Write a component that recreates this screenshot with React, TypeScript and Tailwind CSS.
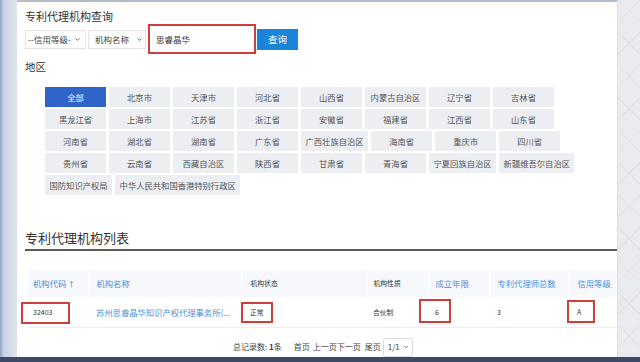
import { ChevronDown } from "lucide-react";

const regions = [
  "全部", "北京市", "天津市", "河北省", "山西省", "内蒙古自治区", "辽宁省", "吉林省",
  "黑龙江省", "上海市", "江苏省", "浙江省", "安徽省", "福建省", "江西省", "山东省",
  "河南省", "湖北省", "湖南省", "广东省", "广西壮族自治区", "海南省", "重庆市", "四川省",
  "贵州省", "云南省", "西藏自治区", "陕西省", "甘肃省", "青海省", "宁夏回族自治区", "新疆维吾尔自治区",
  "国防知识产权局", "中华人民共和国香港特别行政区",
];

const RedBox = ({ className }: { className: string }) => (
  <span className={`absolute border-2 border-[#cf3d3d] ${className}`} />
);

const App = () => {
  return (
    <div className="w-[640px] h-[362px] flex flex-col overflow-hidden font-['Noto_Sans_CJK_SC',sans-serif] bg-white">
      <div className="flex h-[357px]">
        {/* left strip */}
        <div className="w-[17px] bg-[linear-gradient(90deg,#8fa3c4_0px,#c9d4e3_4px,#dde4ee_17px)]" />

        {/* main panel */}
        <div className="w-[600px] flex flex-col overflow-hidden">
          <div className="h-[2px] bg-[#b3bdca]" />
          <div className="flex-1 pl-[8px] pt-[6px] bg-[linear-gradient(180deg,#fffdf4_0px,#ffffff_8px)]">
            <div className="h-[16px] leading-[16px] text-[11px] text-[#333]">专利代理机构查询</div>

            {/* search row */}
            <div className="h-[30px] flex items-center">
              <div className="w-[61px] h-[19px] border border-[#e3e3e3] flex items-center justify-between pl-[2px] pr-[4px] text-[8.5px] text-[#444]">
                <span>--信用等级-</span>
                <ChevronDown size={7} strokeWidth={3} className="text-[#555]" />
              </div>
              <div className="ml-[2px] w-[58px] h-[19px] border border-[#e3e3e3] flex items-center justify-between pl-[6px] pr-[2px] text-[8.5px] text-[#444]">
                <span>机构名称</span>
                <ChevronDown size={7} strokeWidth={3} className="text-[#555]" />
              </div>
              <div className="ml-[2px] w-[108px] h-[30px] border-2 border-[#cf3d3d] flex items-center pl-[6px] text-[8.5px] text-[#333]">
                思睿晶华
              </div>
              <button className="ml-[1px] w-[41px] h-[21px] bg-[#1a84d8] text-white text-[9.5px] flex items-center justify-center">
                查询
              </button>
            </div>

            <div className="mt-[6px] h-[14px] leading-[14px] text-[10.5px] text-[#333]">地区</div>

            {/* regions */}
            <div className="mt-[13px] ml-[20px] w-[540px] flex flex-wrap gap-x-[3px] gap-y-[2px]">
              {regions.map((r, i) => (
                <span
                  key={r}
                  className={`min-w-[61px] h-[20px] px-[4.5px] flex items-center justify-center text-[8.3px] whitespace-nowrap ${
                    i === 0 ? "bg-[#2f64c9] text-white" : "bg-[#eceef1] text-[#555]"
                  }`}
                >
                  {r}
                </span>
              ))}
            </div>

            <div className="mt-[34px] h-[18px] leading-[18px] text-[13px] text-[#333]">专利代理机构列表</div>
            <div className="mt-[2px] h-[2px] bg-[#5a5a5a]" />

            {/* table */}
            <table className="mt-[19px] ml-[3px] w-[589px] table-fixed border-collapse text-left">
              <colgroup>
                <col className="w-[60px]" />
                <col className="w-[154px]" />
                <col className="w-[125px]" />
                <col className="w-[61px]" />
                <col className="w-[62px]" />
                <col className="w-[78px]" />
                <col className="w-[49px]" />
              </colgroup>
              <thead>
                <tr className="h-[27px] bg-[#f6f8fb] text-[8.3px] text-[#4a8fd8] font-normal">
                  <th className="pl-[5px] font-normal border-r border-white">机构代码 <span className="text-[7px] text-[#666]">↑</span></th>
                  <th className="pl-[8px] font-normal border-r border-white">机构名称</th>
                  <th className="pl-[8px] font-normal border-r border-white text-[6.8px] text-[#333]">机构状态</th>
                  <th className="pl-[6px] font-normal border-r border-white text-[6.8px] text-[#333]">机构性质</th>
                  <th className="pl-[7px] font-normal border-r border-white">成立年限</th>
                  <th className="pl-[7px] font-normal border-r border-white">专利代理师总数</th>
                  <th className="pl-[9px] font-normal">信用等级</th>
                </tr>
              </thead>
              <tbody>
                <tr className="h-[30px] border-b border-[#eceef1] text-[7px] text-[#333]">
                  <td className="relative pl-[5px]">
                    32403
                    <RedBox className="left-[-7px] top-[5px] w-[49px] h-[22px]" />
                  </td>
                  <td className="pl-[8px] text-[8.3px] text-[#4a8fd8] whitespace-nowrap overflow-hidden">
                    苏州思睿晶华知识产权代理事务所(...
                  </td>
                  <td className="relative pl-[8px] text-[6.8px]">
                    正常
                    <RedBox className="left-[-1px] top-[5px] w-[32px] h-[21px]" />
                  </td>
                  <td className="pl-[6px] text-[6.8px]">合伙制</td>
                  <td className="relative pl-[7px]">
                    6
                    <RedBox className="left-[-9px] top-[2px] w-[32px] h-[24px]" />
                  </td>
                  <td className="pl-[7px]">3</td>
                  <td className="relative pl-[9px]">
                    A
                    <RedBox className="left-[-1px] top-[3px] w-[28px] h-[23px]" />
                  </td>
                </tr>
              </tbody>
            </table>

            {/* pagination */}
            <div className="mt-[10px] h-[19px] ml-[208px] flex items-center text-[8px] text-[#444]">
              <span>总记录数: <b className="font-bold">1</b>条</span>
              <span className="ml-[12px]">首页</span>
              <span className="ml-[3px]">上一页下一页</span>
              <span className="ml-[4px]">尾页</span>
              <span className="ml-[2px] w-[30px] h-[19px] border border-[#ddd] rounded-[2px] flex items-center justify-between pl-[4px] pr-[3px]">
                1/1
                <ChevronDown size={6} strokeWidth={3} />
              </span>
            </div>
          </div>
        </div>

        {/* right strip */}
        <div className="flex-1 bg-[#e9ebef] bg-[repeating-linear-gradient(45deg,transparent_0px,transparent_22px,#dfe2e7_22px,#dfe2e7_23px),repeating-linear-gradient(-45deg,transparent_0px,transparent_22px,#dfe2e7_22px,#dfe2e7_23px)] border-l border-[#dcdfe4]" />
      </div>
      <div className="h-[5px] bg-[#3c4a67]" />
    </div>
  );
};

export default App;
